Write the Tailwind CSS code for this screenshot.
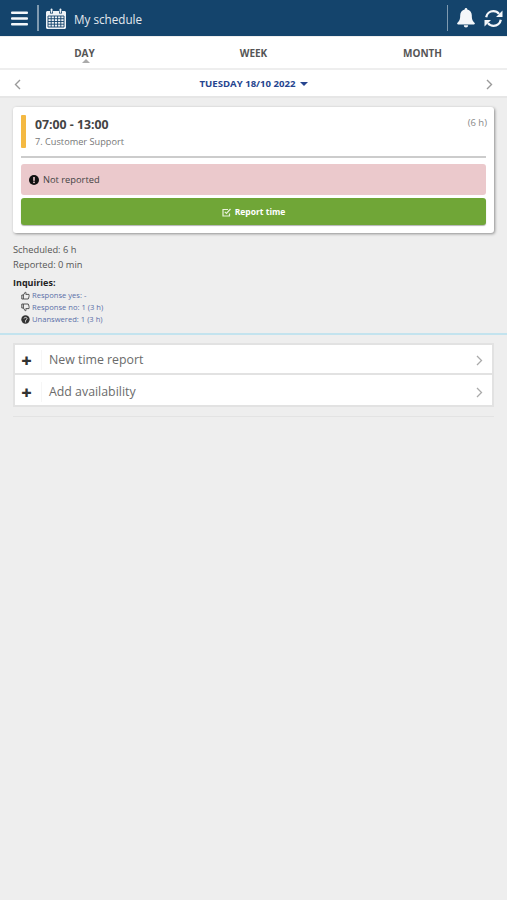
<!DOCTYPE html>
<html lang="en">
<head>
    <meta charset="UTF-8">
    <meta name="viewport" content="width=device-width, initial-scale=1.0">
    <title>My schedule</title>
    <script src="https://cdn.jsdelivr.net/npm/@tailwindcss/browser@4"></script>
</head>
<body class="bg-[#eeeeee] min-h-screen font-['Open_Sans',sans-serif] text-[#444444]">

    <!-- Header -->
    <header class="h-[36px] bg-[#14446c] flex items-center text-white">
        <button class="w-[37px] flex justify-center pl-[2px] pt-[1px]">
            <svg width="17" height="15" viewBox="0 0 17 15" fill="#f4f7fa"><rect y="0.5" width="17" height="2.6" rx="1"/><rect y="6.2" width="17" height="2.6" rx="1"/><rect y="11.9" width="17" height="2.6" rx="1"/></svg>
        </button>
        <div class="w-[2px] h-[26px] bg-[#7f9ab0]"></div>
        <svg class="ml-[7px] mt-[1px]" width="20" height="21" viewBox="0 0 20 21" fill="#eef2f6">
            <path d="M1.5 3H4V5.5H7V3H13V5.5H16V3H18.5C19.3 3 20 3.7 20 4.5V19.5C20 20.3 19.3 21 18.5 21H1.5C.7 21 0 20.3 0 19.5V4.5C0 3.7.7 3 1.5 3Z"/>
            <rect x="4.7" y="0.5" width="1.7" height="4.4" rx=".8"/><rect x="13.6" y="0.5" width="1.7" height="4.4" rx=".8"/>
            <path stroke="#14446c" stroke-width=".9" fill="none" d="M2 8H18V19H2ZM2 10.7H18M2 13.5H18M2 16.2H18M5.2 8V19M8.4 8V19M11.6 8V19M14.8 8V19"/>
        </svg>
        <span class="ml-[8px] mt-[3px] text-[11.7px] text-[#e3e9ef]">My schedule</span>
        <div class="ml-auto w-[1.5px] h-[26px] bg-[#7f9ab0]"></div>
        <svg class="ml-[9px]" width="18" height="20" viewBox="0 0 18 20" fill="#f4f7fa">
            <path d="M9 0C8.2 0 7.7.6 7.7 1.4 5 2 3.2 4.2 3.2 7.2 3.2 11.5 2.4 13 .3 15c-.4.5-.2 1.4.7 1.4h16c.9 0 1.100-.9.7-1.400C15.600 13 14.800 11.500 14.800 7.200 14.800 4.200 13 2 10.300 1.400 10.300.6 9.800 0 9 0Z"/>
            <path d="M6.800 17.300a2.200 2.200 0 0 0 4.400 0Z"/>
        </svg>
        <svg class="ml-[9px] mr-[4px]" width="19" height="19" viewBox="0 0 19 19" fill="none" stroke="#f4f7fa" stroke-width="2.300">
            <path d="M2.200 8.200C2.800 4.600 5.800 2.200 9.400 2.200c2.300 0 4.300 1 5.600 2.700"/>
            <path d="M16.800 10.800c-.6 3.600-3.600 6-7.200 6-2.300 0-4.300-1-5.600-2.700"/>
            <path fill="#f4f7fa" stroke="none" d="M18.500 1.500V8H12ZM.5 17.500V11H7Z"/>
        </svg>
    </header>

    <!-- Tabs -->
    <nav class="h-[33px] mt-[1px] bg-white border-b-2 border-[#eeeeee] grid grid-cols-3 text-[10px] font-bold text-[#555555]">
        <div class="relative flex justify-center pt-[9px]">
            <span class="leading-[14px]">DAY</span>
            <span class="absolute top-[22px] left-1/2 -ml-[3px] border-x-[4px] border-x-transparent border-b-[4px] border-b-[#aaaaaa]"></span>
        </div>
        <div class="flex justify-center pt-[9px]"><span class="leading-[14px]">WEEK</span></div>
        <div class="flex justify-center pt-[9px]"><span class="leading-[14px]">MONTH</span></div>
    </nav>

    <!-- Date row -->
    <div class="h-[28px] bg-white border-b-2 border-[#e6e6e6] flex items-center justify-between px-[14px]">
        <svg class="mt-[2px]" width="7" height="11" viewBox="0 0 7 11" fill="none" stroke="#9a9a9a" stroke-width="1.400"><path d="M6 1 1.500 5.500 6 10"/></svg>
        <div class="flex items-center pt-[2px] text-[9.6px] font-bold text-[#26458f]">
            <span>TUESDAY 18/10 2022</span>
            <span class="ml-[4px] border-x-[4px] border-x-transparent border-t-[4px] border-t-[#26458f]"></span>
        </div>
        <svg class="mt-[2px]" width="7" height="11" viewBox="0 0 7 11" fill="none" stroke="#9a9a9a" stroke-width="1.400"><path d="M1 1 5.500 5.500 1 10"/></svg>
    </div>

    <main class="px-[13px] pt-[9px]">
        <!-- Shift card -->
        <section class="bg-white rounded-[3px] shadow-[1px_1px_3px_rgba(0,0,0,0.4)] px-[8px] pt-[8px] pb-[8px] h-[126px]">
            <div class="flex h-[33px]">
                <div class="w-[5px] bg-[#f4b942] rounded-[1px]"></div>
                <div class="ml-[9px] flex-1 pt-[1px]">
                    <div class="text-[12.3px] font-bold leading-[18px] text-[#444444]">07:00 - 13:00</div>
                    <div class="text-[9.2px] leading-[14px] mt-[1px] text-[#777777]">7. Customer Support</div>
                </div>
                <div class="text-[9.5px] leading-[14px] pt-[1px] text-[#888888] -mr-[1px]">(6 h)</div>
            </div>
            <div class="h-[2px] bg-[#cccccc] mt-[8px]"></div>
            <div class="h-[31px] mt-[6px] bg-[#ebc9cc] rounded-[3px] flex items-center pl-[8px] text-[9.3px] text-[#444444]">
                <svg width="10" height="10" viewBox="0 0 10 10"><circle cx="5" cy="5" r="5" fill="#111"/><rect x="4.200" y="2" width="1.600" height="3.800" fill="#ebc9cc"/><rect x="4.200" y="6.600" width="1.600" height="1.500" fill="#ebc9cc"/></svg>
                <span class="ml-[4px]">Not reported</span>
            </div>
            <button class="w-full h-[27px] mt-[3px] pt-[1px] bg-[#70a637] rounded-[3px] shadow-[0_1px_1px_rgba(0,0,0,0.3)] flex items-center justify-center text-[8.500px] font-bold text-white">
                <svg width="9" height="9" viewBox="0 0 9 9" fill="none" stroke="#e8f2dc" stroke-width="1.200"><path d="M7.500 5.500V8H1V1.500H6"/><path d="M2.800 3.800 4.500 5.500 8.500 1"/></svg>
                <span class="ml-[4px]">Report time</span>
            </button>
        </section>

        <!-- Summary -->
        <div class="mt-[9px] text-[9.3px] leading-[15px] text-[#555555]">
            <div>Scheduled: 6 h</div>
            <div>Reported: 0 min</div>
        </div>
        <div class="mt-[4px] text-[9px] leading-[13px] font-bold text-[#222222]">Inquiries:</div>
        <ul class="pl-[8px] text-[7.6px] leading-[12px] text-[#5a6fa8]">
            <li class="flex items-center">
                <svg width="9" height="9" viewBox="0 0 9 9" fill="none" stroke="#444" stroke-width=".9"><path d="M.8 4H2.400V8H.8ZM2.400 4 4.200 1.200C5 1 5.200 2 4.800 3.400H8C8.400 4.500 7.800 7 7.200 8H2.400"/></svg>
                <span class="ml-[2px]">Response yes: -</span>
            </li>
            <li class="flex items-center">
                <svg width="9" height="9" viewBox="0 0 9 9" fill="none" stroke="#444" stroke-width=".9"><path d="M.8 5H2.400V1H.8ZM2.400 5 4.200 7.800C5 8 5.200 7 4.800 5.600H8C8.400 4.500 7.800 2 7.200 1H2.400"/></svg>
                <span class="ml-[2px]">Response no: 1 (3 h)</span>
            </li>
            <li class="flex items-center">
                <svg width="9" height="9" viewBox="0 0 9 9"><circle cx="4.500" cy="4.500" r="4.200" fill="#333"/><path d="M3 3.500C3.200 2 5.800 2 6 3.500 6 4.600 4.800 4.500 4.800 5.600H4.100" fill="none" stroke="#eee" stroke-width=".9"/><rect x="4" y="6.300" width="1" height="1" fill="#eee"/></svg>
                <span class="ml-[2px]">Unanswered: 1 (3 h)</span>
            </li>
        </ul>
    </main>

    <div class="h-[2px] mt-[8px] bg-[#c3e3ee]"></div>

    <!-- Actions -->
    <div class="mx-[13px] mt-[8px] border-b border-[#e3e3e3] pb-[9px]">
        <div class="h-[32px] pt-[2px] bg-white border-x-2 border-y-2 border-[#e2e2e2] flex items-center">
            <span class="w-[26px] pr-[3px] text-center text-[18px] font-extrabold leading-none text-[#333333]">+</span>
            <span class="w-[1px] h-[20px] bg-[#f6f6f6]"></span>
            <span class="ml-[7px] text-[12.35px] text-[#6b6b6b]">New time report</span>
            <svg class="ml-auto mr-[9px]" width="7" height="11" viewBox="0 0 7 11" fill="none" stroke="#aaaaaa" stroke-width="1.300"><path d="M1 1 5.500 5.500 1 10"/></svg>
        </div>
        <div class="h-[32px] pt-[4px] bg-white border-x-2 border-b-2 border-[#e2e2e2] flex items-center">
            <span class="w-[26px] pr-[3px] text-center text-[18px] font-extrabold leading-none text-[#333333]">+</span>
            <span class="w-[1px] h-[20px] bg-[#f6f6f6]"></span>
            <span class="ml-[7px] text-[12.35px] text-[#6b6b6b]">Add availability</span>
            <svg class="ml-auto mr-[9px]" width="7" height="11" viewBox="0 0 7 11" fill="none" stroke="#aaaaaa" stroke-width="1.300"><path d="M1 1 5.500 5.500 1 10"/></svg>
        </div>
    </div>

</body>
</html>
